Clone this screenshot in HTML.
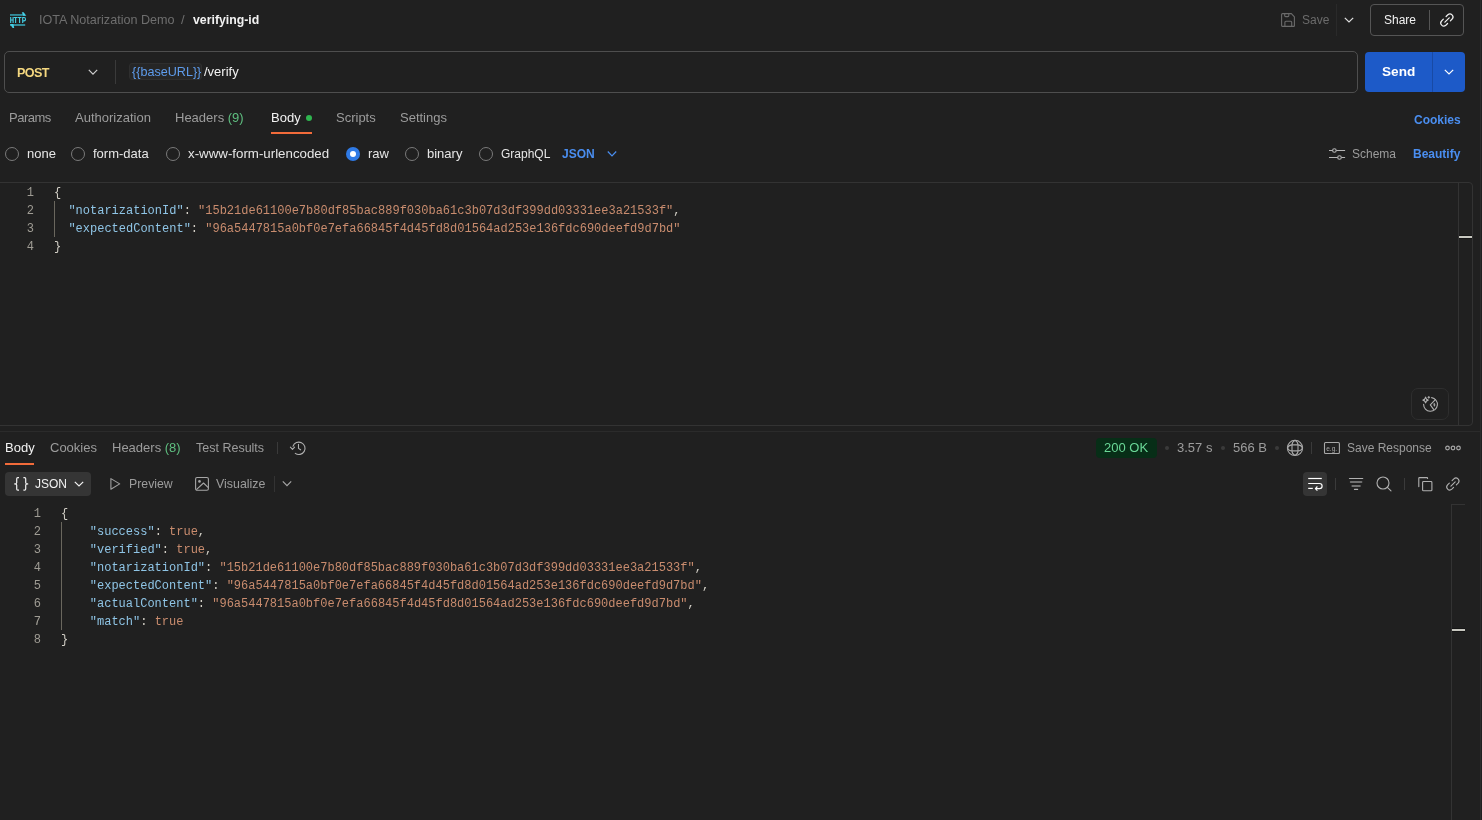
<!DOCTYPE html>
<html><head><meta charset="utf-8">
<style>
html,body{margin:0;padding:0;}
body{width:1482px;height:820px;overflow:hidden;background:#202020;position:relative;will-change:transform;font-family:"Liberation Sans",sans-serif;font-size:13px;color:#9c9c9c;}
.a{position:absolute;white-space:pre;line-height:16px;}
.ln{position:absolute;left:0;height:1px;background:#303030;}
.vl{position:absolute;width:1px;background:#3a3a3a;}
svg{position:absolute;overflow:visible;}
.mono{font-family:"Liberation Mono",monospace;font-size:12px;line-height:18px;}
.k{color:#8fc5e6;}
.s{color:#c98c6e;}
.p{color:#d2cfc6;}
.num{position:absolute;text-align:right;color:#9f9c94;}
.radio{position:absolute;width:12px;height:12px;border:1px solid #7a7a7a;border-radius:50%;}
</style></head>
<body>
<!-- right window edge -->
<div style="position:absolute;left:1480px;top:0;width:1px;height:820px;background:#2c2c2c"></div>

<!-- ===== HEADER ===== -->
<svg style="left:9px;top:11px" width="18" height="18" viewBox="0 0 18 18"></svg>
<div class="a" style="left:39px;top:12px;color:#6e6e6e;font-size:12.6px">IOTA Notarization Demo</div>
<div class="a" style="left:181px;top:12px;color:#6e6e6e">/</div>
<div class="a" style="left:193px;top:12px;color:#f2f2f2;font-weight:700;font-size:12.3px">verifying-id</div>

<div class="a" style="left:1302px;top:12px;color:#6b6b6b;font-size:12px">Save</div>
<div class="vl" style="left:1336px;top:4px;height:32px;background:#2a2a2a"></div>
<div style="position:absolute;left:1370px;top:4px;width:92px;height:30px;border:1px solid #555;border-radius:4px"></div>
<div class="a" style="left:1384px;top:12px;color:#f2f2f2;font-size:12px">Share</div>
<div class="vl" style="left:1429px;top:10px;height:20px;background:#555"></div>

<!-- ===== URL BAR ===== -->
<div style="position:absolute;left:4px;top:51px;width:1352px;height:40px;border:1px solid #4e4e4e;border-radius:5px"></div>
<div class="a" style="left:17px;top:65px;color:#f4d77f;font-weight:700;font-size:12.6px;letter-spacing:-0.6px">POST</div>
<div class="vl" style="left:115px;top:60px;height:24px;background:#3a3a3a"></div>
<div style="position:absolute;left:129px;top:63px;width:73px;height:17px;background:#262626;border:1px solid #2e2e2e;border-radius:3px;box-sizing:border-box"></div>
<div class="a" style="left:132px;top:64px;color:#5e9cec;font-size:12.6px">{{baseURL}}</div>
<div class="a" style="left:204px;top:64px;color:#f2f2f2">/verify</div>

<div style="position:absolute;left:1365px;top:52px;width:100px;height:40px;background:#1d5ac8;border-radius:4px"></div>
<div style="position:absolute;left:1432px;top:52px;width:1px;height:40px;background:#184aa5"></div>
<div class="a" style="left:1382px;top:64px;color:#fff;font-weight:700;font-size:13.6px">Send</div>

<!-- ===== REQUEST TABS ===== -->
<div class="a" style="left:9px;top:110px;letter-spacing:-0.5px">Params</div>
<div class="a" style="left:75px;top:110px">Authorization</div>
<div class="a" style="left:175px;top:110px">Headers <span style="color:#5fbf80">(9)</span></div>
<div class="a" style="left:271px;top:110px;color:#f2f2f2">Body</div>
<div style="position:absolute;left:306px;top:115px;width:6px;height:6px;border-radius:50%;background:#2fb54f"></div>
<div style="position:absolute;left:271px;top:132px;width:41px;height:2px;background:#f26b3a"></div>
<div class="a" style="left:336px;top:110px">Scripts</div>
<div class="a" style="left:400px;top:110px">Settings</div>
<div class="a" style="left:1414px;top:112px;color:#4a8ef0;font-weight:700;font-size:12px">Cookies</div>

<!-- radio row -->
<div class="radio" style="left:5px;top:147px"></div>
<div class="a" style="left:27px;top:146px;color:#e6e6e6">none</div>
<div class="radio" style="left:71px;top:147px"></div>
<div class="a" style="left:93px;top:146px;color:#e6e6e6">form-data</div>
<div class="radio" style="left:166px;top:147px"></div>
<div class="a" style="left:188px;top:146px;color:#e6e6e6;font-size:13.3px">x-www-form-urlencoded</div>
<div style="position:absolute;left:346px;top:147px;width:14px;height:14px;border-radius:50%;background:#2f7ae5"></div>
<div style="position:absolute;left:350px;top:151px;width:6px;height:6px;border-radius:50%;background:#fff"></div>
<div class="a" style="left:368px;top:146px;color:#e6e6e6">raw</div>
<div class="radio" style="left:405px;top:147px"></div>
<div class="a" style="left:427px;top:146px;color:#e6e6e6">binary</div>
<div class="radio" style="left:479px;top:147px"></div>
<div class="a" style="left:501px;top:146px;color:#e6e6e6;font-size:12px">GraphQL</div>
<div class="a" style="left:562px;top:146px;color:#4a8ef0;font-weight:700;font-size:12px">JSON</div>

<div class="a" style="left:1352px;top:146px;font-size:12px">Schema</div>
<div class="a" style="left:1413px;top:146px;color:#4a8ef0;font-weight:700;font-size:12px">Beautify</div>

<!-- ===== REQUEST EDITOR ===== -->
<div style="position:absolute;left:-10px;top:182px;width:1483px;height:244px;border:1px solid #333;border-radius:0 4px 4px 0;box-sizing:border-box"></div>
<div class="vl" style="left:1458px;top:183px;height:243px;background:#333"></div>
<div style="position:absolute;left:1459px;top:236px;width:13px;height:2px;background:#c8c8c0;box-shadow:0 1px 0 #151515,0 -1px 0 #151515"></div>

<div class="mono num" style="left:0;top:184px;width:34px">1<br>2<br>3<br>4</div>
<div class="vl" style="left:54px;top:201px;height:36px;background:#6a675e"></div>
<div class="mono a" style="left:54px;top:184px"><span class="p">{</span>
  <span class="k">"notarizationId"</span><span class="p">: </span><span class="s">"15b21de61100e7b80df85bac889f030ba61c3b07d3df399dd03331ee3a21533f"</span><span class="p">,</span>
  <span class="k">"expectedContent"</span><span class="p">: </span><span class="s">"96a5447815a0bf0e7efa66845f4d45fd8d01564ad253e136fdc690deefd9d7bd"</span>
<span class="p">}</span></div>

<div style="position:absolute;left:1411px;top:388px;width:38px;height:32px;border:1px solid #2e2e2e;border-radius:7px;box-sizing:border-box"></div>

<div class="ln" style="top:431px;width:1480px;background:#2b2b2b"></div>

<!-- ===== RESPONSE TABS ===== -->
<div class="a" style="left:5px;top:440px;color:#f2f2f2">Body</div>
<div style="position:absolute;left:5px;top:463px;width:29px;height:2px;background:#f26b3a"></div>
<div class="a" style="left:50px;top:440px">Cookies</div>
<div class="a" style="left:112px;top:440px">Headers <span style="color:#5fbf80">(8)</span></div>
<div class="a" style="left:196px;top:440px;font-size:12.5px">Test Results</div>
<div class="vl" style="left:277px;top:442px;height:12px;background:#3a3a3a"></div>

<div style="position:absolute;left:1096px;top:438px;width:61px;height:20px;background:#072e17;border-radius:4px"></div>
<div class="a" style="left:1104px;top:440px;color:#6ad897">200 OK</div>
<div class="a" style="left:1177px;top:440px">3.57 s</div>
<div class="a" style="left:1233px;top:440px">566 B</div>
<div class="vl" style="left:1311px;top:442px;height:12px;background:#3a3a3a"></div>
<div class="a" style="left:1347px;top:440px;font-size:12px">Save Response</div>

<!-- row 2 -->
<div style="position:absolute;left:5px;top:472px;width:86px;height:24px;background:#353535;border-radius:4px"></div>
<div class="a" style="left:35px;top:476px;color:#f2f2f2;font-size:12px">JSON</div>
<div class="a" style="left:129px;top:476px;font-size:12.3px">Preview</div>
<div class="a" style="left:216px;top:476px;font-size:12.4px">Visualize</div>
<div class="vl" style="left:274px;top:476px;height:16px;background:#333"></div>

<div style="position:absolute;left:1303px;top:472px;width:24px;height:24px;background:#353535;border-radius:4px"></div>
<div class="vl" style="left:1335px;top:478px;height:12px;background:#3a3a3a"></div>
<div class="vl" style="left:1404px;top:478px;height:12px;background:#3a3a3a"></div>

<!-- ===== RESPONSE EDITOR ===== -->
<div class="mono num" style="left:0;top:505px;width:41px">1<br>2<br>3<br>4<br>5<br>6<br>7<br>8</div>
<div class="vl" style="left:61px;top:522px;height:108px;background:#6a675e"></div>
<div class="mono a" style="left:61px;top:505px"><span class="p">{</span>
    <span class="k">"success"</span><span class="p">: </span><span class="s">true</span><span class="p">,</span>
    <span class="k">"verified"</span><span class="p">: </span><span class="s">true</span><span class="p">,</span>
    <span class="k">"notarizationId"</span><span class="p">: </span><span class="s">"15b21de61100e7b80df85bac889f030ba61c3b07d3df399dd03331ee3a21533f"</span><span class="p">,</span>
    <span class="k">"expectedContent"</span><span class="p">: </span><span class="s">"96a5447815a0bf0e7efa66845f4d45fd8d01564ad253e136fdc690deefd9d7bd"</span><span class="p">,</span>
    <span class="k">"actualContent"</span><span class="p">: </span><span class="s">"96a5447815a0bf0e7efa66845f4d45fd8d01564ad253e136fdc690deefd9d7bd"</span><span class="p">,</span>
    <span class="k">"match"</span><span class="p">: </span><span class="s">true</span>
<span class="p">}</span></div>

<div class="vl" style="left:1451px;top:504px;height:316px;background:#333"></div>
<div class="ln" style="left:1451px;top:504px;width:14px;background:#333"></div>
<div style="position:absolute;left:1452px;top:629px;width:13px;height:2px;background:#c8c8c0;box-shadow:0 1px 0 #151515,0 -1px 0 #151515"></div>


<!-- ===== ICONS ===== -->
<svg style="left:9px;top:11px" width="18" height="18" viewBox="0 0 18 18">
 <rect x="1" y="3.1" width="15" height="1.7" fill="#3595a5"/>
 <polygon points="12.8,1.2 14.6,1.2 17.3,4.8 14.2,4.8" fill="#45d0e6"/>
 <rect x="1" y="13.1" width="15.2" height="1.8" fill="#3595a5"/>
 <polygon points="1,13.1 4.4,13.1 5.2,17 3.6,17" fill="#45d0e6"/>
 <g stroke="#45d0e6" stroke-width="1.1" fill="none">
  <path d="M1.7,6 V12 M4.1,6 V12 M1.7,9 H4.1"/>
  <path d="M4.7,6.5 H8.5 M6.6,6.5 V12"/>
  <path d="M8.7,6.5 H12.5 M10.6,6.5 V12"/>
  <path d="M13.7,12 V6.5 H15 Q16.5,6.5 16.5,8.2 Q16.5,9.9 15,9.9 H13.7"/>
 </g>
</svg>
<svg style="left:1280px;top:12px" width="16" height="16" viewBox="0 0 16 16" fill="none" stroke="#6b6b6b" stroke-width="1.1" stroke-linejoin="round">
 <path d="M1.6,2.6 Q1.6,1.6 2.6,1.6 L11.4,1.6 L14.4,4.8 L14.4,13.7 Q14.4,14.4 13.7,14.4 L2.4,14.4 Q1.6,14.4 1.6,13.6 Z"/>
 <path d="M4.7,1.6 V3.7 Q4.7,4.6 5.6,4.6 H7.9 Q8.8,4.6 8.8,3.7 V1.6"/>
 <path d="M4.9,14.4 V10.2 Q4.9,9.2 5.9,9.2 H10.7 Q11.7,9.2 11.7,10.2 V14.4"/>
</svg>
<svg style="left:1342px;top:14px" width="14" height="12" viewBox="0 0 14 12" fill="none" stroke="#e0e0e0" stroke-width="1.2">
 <path d="M2.8,3.8 L7,8 L11.2,3.8"/>
</svg>
<svg style="left:1436px;top:8px" width="24" height="24" viewBox="0 0 24 24" fill="none" stroke="#f0f0f0" stroke-width="1.2" stroke-linecap="round">
 <path d="M10.1,8.55 L11.88,6.78 A3,3 0 0 1 16.12,11.02 L14.35,12.8"/>
 <path d="M7.35,11.2 L5.58,12.98 A3,3 0 0 0 9.82,17.22 L11.6,15.45"/>
 <path d="M8.9,14.2 L13.2,9.8"/>
</svg>
<!-- POST chevron -->
<svg style="left:86px;top:65px" width="14" height="14" viewBox="0 0 14 14" fill="none" stroke="#cfcfcf" stroke-width="1.2">
 <path d="M2.8,4.9 L7,9.2 L11.2,4.9"/>
</svg>
<!-- Send chevron -->
<svg style="left:1442px;top:65px" width="14" height="14" viewBox="0 0 14 14" fill="none" stroke="#ffffff" stroke-width="1.2">
 <path d="M2.8,4.8 L7,9 L11.2,4.8"/>
</svg>
<!-- JSON (radio row) chevron -->
<svg style="left:605px;top:147px" width="14" height="14" viewBox="0 0 14 14" fill="none" stroke="#4a8ef0" stroke-width="1.2">
 <path d="M2.8,4.5 L7,8.8 L11.2,4.5"/>
</svg>
<!-- schema sliders -->
<svg style="left:1324px;top:142px" width="26" height="24" viewBox="0 0 26 24" fill="none" stroke="#b5b5b5" stroke-width="1.1">
 <path d="M5,8.5 H8.6 M12.2,8.5 H21.1 M5,15.5 H13.7 M17.3,15.5 H21.1"/>
 <circle cx="10.4" cy="8.5" r="1.8"/>
 <circle cx="15.5" cy="15.5" r="1.8"/>
</svg>
<!-- beautify magic icon -->
<svg style="left:1418px;top:392px" width="24" height="24" viewBox="0 0 24 24" fill="none" stroke="#b0b0b0" stroke-width="1.1" stroke-linejoin="round" stroke-linecap="round">
 <path d="M13.6,5.6 A6.9,6.9 0 1 1 5.6,12.3"/>
 <path d="M17.4,7.6 L12.3,12.9 L15.6,17.3"/>
 <path d="M16.4,11.4 L17,12.9 L16.4,14.4 L15.8,12.9 Z" fill="#b0b0b0" stroke-width="0.6"/>
 <path d="M7.6,5.1 Q8.1,7.6 10.2,8.1 Q8.1,8.6 7.6,11 Q7.1,8.6 4.9,8.1 Q7.1,7.6 7.6,5.1 Z"/>
 <path d="M10.8,4.5 V6.1 M10,5.3 H11.6"/>
</svg>
<!-- history icon -->
<svg style="left:284px;top:436px" width="28" height="24" viewBox="0 0 28 24" fill="none" stroke="#b0b0b0" stroke-width="1.1" stroke-linecap="round" stroke-linejoin="round">
 <path d="M9,10.2 A6.2,6.2 0 1 1 11.3,17.4"/>
 <path d="M6.4,11.2 L8.5,13.3 L10.6,11.2"/>
 <path d="M14.5,8.3 V12.4 L16.6,13.8"/>
</svg>
<!-- globe -->
<svg style="left:1282px;top:436px" width="26" height="24" viewBox="0 0 26 24" fill="none" stroke="#a8a8a8" stroke-width="1.1" stroke-linejoin="round">
 <circle cx="13" cy="11.9" r="7.6"/>
 <path d="M13,4.3 Q10,6 10,8.9 V14.9 Q10,17.8 13,19.5"/>
 <path d="M13,4.3 Q16,6 16,8.9 V14.9 Q16,17.8 13,19.5"/>
 <path d="M5.4,11.9 Q7,8.9 10,8.9 H16 Q19,8.9 20.6,11.9"/>
 <path d="M5.4,11.9 Q7,14.9 10,14.9 H16 Q19,14.9 20.6,11.9"/>
</svg>
<!-- save response icon -->
<svg style="left:1322px;top:440px" width="20" height="16" viewBox="0 0 20 16" fill="none" stroke="#a8a8a8" stroke-width="1.1">
 <rect x="2.5" y="2.5" width="14.9" height="11" rx="1"/>
 <text x="4.2" y="10.6" fill="#a8a8a8" stroke="none" font-family="Liberation Sans" font-size="6.5" font-weight="400" textLength="11" lengthAdjust="spacingAndGlyphs">e.g.</text>
</svg>
<!-- more dots -->
<svg style="left:1444px;top:444px" width="18" height="8" viewBox="0 0 18 8" fill="none" stroke="#a8a8a8" stroke-width="1.2">
 <circle cx="3.5" cy="4" r="1.8"/><circle cx="9" cy="4" r="1.8"/><circle cx="14.5" cy="4" r="1.8"/>
</svg>
<!-- status dots -->
<div style="position:absolute;left:1165px;top:446px;width:4px;height:4px;border-radius:50%;background:#3a3a3a"></div>
<div style="position:absolute;left:1221px;top:446px;width:4px;height:4px;border-radius:50%;background:#3a3a3a"></div>
<div style="position:absolute;left:1275px;top:446px;width:4px;height:4px;border-radius:50%;background:#3a3a3a"></div>
<!-- braces -->
<svg style="left:8px;top:470px" width="26" height="28" viewBox="0 0 26 28" fill="none" stroke="#f2f2f2" stroke-width="1.2" stroke-linejoin="round">
 <path d="M11,7.7 H9.8 Q8.7,7.7 8.7,8.8 V12.7 Q8.7,13.9 6.7,13.9 Q8.7,13.9 8.7,15.1 V19.1 Q8.7,20.2 9.8,20.2 H11"/>
 <path d="M15.4,7.7 H16.6 Q17.7,7.7 17.7,8.8 V12.7 Q17.7,13.9 19.7,13.9 Q17.7,13.9 17.7,15.1 V19.1 Q17.7,20.2 16.6,20.2 H15.4"/>
</svg>
<svg style="left:72px;top:477px" width="14" height="14" viewBox="0 0 14 14" fill="none" stroke="#f2f2f2" stroke-width="1.2">
 <path d="M2.8,4.8 L7,9 L11.2,4.8"/>
</svg>
<!-- play -->
<svg style="left:104px;top:472px" width="24" height="24" viewBox="0 0 24 24" fill="none" stroke="#a0a0a0" stroke-width="1.1" stroke-linejoin="round">
 <path d="M6.9,6.6 L15.7,11.9 L6.9,17.2 Z"/>
</svg>
<!-- image -->
<svg style="left:190px;top:472px" width="24" height="24" viewBox="0 0 24 24" fill="none" stroke="#a6a6a6" stroke-width="1.1" stroke-linejoin="round">
 <rect x="5.6" y="5.5" width="12.8" height="12.8" rx="1.5"/>
 <circle cx="9.5" cy="9.4" r="1.3" fill="#a6a6a6" stroke="none"/>
 <path d="M6.4,17.6 L13.5,11 L18.3,15.6"/>
</svg>
<svg style="left:280px;top:477px" width="14" height="14" viewBox="0 0 14 14" fill="none" stroke="#a6a6a6" stroke-width="1.2">
 <path d="M2.8,4.4 L7,8.6 L11.2,4.4"/>
</svg>
<!-- wrap -->
<svg style="left:1300px;top:470px" width="28" height="28" viewBox="0 0 28 28" fill="none" stroke="#ffffff" stroke-width="1.2" stroke-linecap="butt" stroke-linejoin="round">
 <path d="M8.2,8.5 H21.8"/>
 <path d="M8.2,13.5 H19.5 A2.6,2.6 0 0 1 19.5,18.7 H15.6"/>
 <path d="M17.4,16.5 L15.4,18.6 L17.4,20.6"/>
 <path d="M8.2,18.4 H12.8"/>
</svg>
<!-- filter -->
<svg style="left:1344px;top:472px" width="24" height="24" viewBox="0 0 24 24" fill="none" stroke-linecap="round">
 <path d="M5.5,6.5 H18.7" stroke="#b0b0b0" stroke-width="1.2"/>
 <path d="M6.6,10 H17.6" stroke="#8a8a8a" stroke-width="1.6"/>
 <path d="M8.2,14 H16" stroke="#8a8a8a" stroke-width="1.6"/>
 <path d="M10.5,17.4 H13.6" stroke="#b0b0b0" stroke-width="1.2"/>
</svg>
<!-- search -->
<svg style="left:1372px;top:472px" width="24" height="24" viewBox="0 0 24 24" fill="none" stroke="#b0b0b0" stroke-width="1.1" stroke-linecap="round">
 <circle cx="11" cy="11" r="6"/>
 <path d="M15.4,15.4 L19,18.8"/>
</svg>
<!-- copy -->
<svg style="left:1414px;top:472px" width="24" height="24" viewBox="0 0 24 24" fill="none" stroke="#b0b0b0" stroke-width="1.1" stroke-linejoin="round" stroke-linecap="round">
 <path d="M4.8,14.6 V6.2 Q4.8,5.6 5.4,5.6 H13 Q13.6,5.6 13.6,6.5"/>
 <rect x="8.6" y="9.5" width="9.3" height="9.3" rx="0.9"/>
</svg>
<!-- link small -->
<svg style="left:1442px;top:472px" width="24" height="24" viewBox="0 0 24 24" fill="none" stroke="#b0b0b0" stroke-width="1.1" stroke-linecap="round">
 <path d="M10.1,8.55 L11.88,6.78 A3,3 0 0 1 16.12,11.02 L14.35,12.8"/>
 <path d="M7.35,11.2 L5.58,12.98 A3,3 0 0 0 9.82,17.22 L11.6,15.45"/>
 <path d="M8.9,14.2 L13.2,9.8"/>
</svg>

</body></html>
